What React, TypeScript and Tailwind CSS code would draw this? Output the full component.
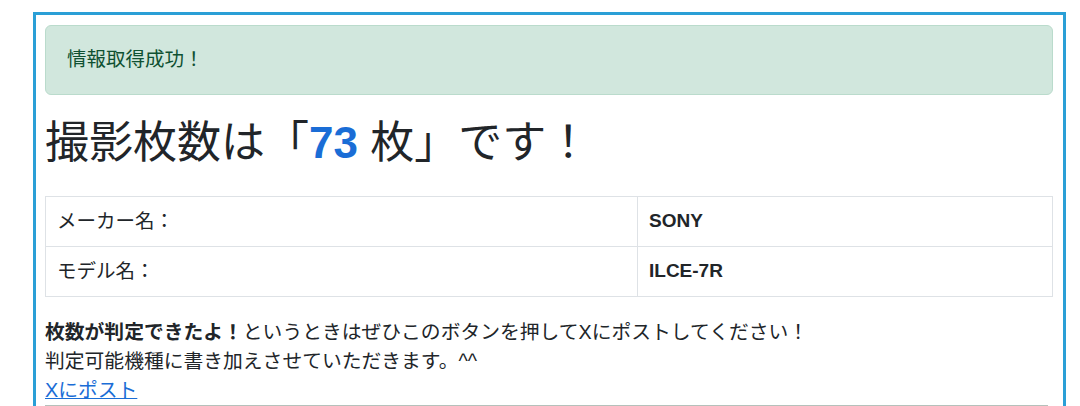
export default function App() {
  const font = {
    fontFamily: '"Liberation Sans", "Noto Sans CJK JP", sans-serif',
  };
  return (
    <div className="min-h-screen bg-white pl-[33px] pt-[12px]" style={font}>
      <div className="w-[1033px] border-[3px] border-[#2a9fd6] pl-[9px] pr-[10px] pt-[10px] pb-[40px] text-[#212529]">
        {/* success alert */}
        <div className="h-[70px] flex items-center rounded-[6px] border border-[#badbcc] bg-[#d1e7dd] px-[21px] text-[19.5px] text-[#0f5132]">
          情報取得成功！
        </div>

        <h1 className="mt-[19px] h-[58px] flex items-center text-[44px] font-normal leading-none">
          撮影枚数は「<span className="font-bold text-[#1a6dd6]">73</span>&nbsp;枚」です！
        </h1>

        <table className="mt-[24px] w-full border-collapse text-[19.5px]">
          <tbody>
            <tr className="h-[50px]">
              <td className="w-[592px] border border-[#dee2e6] px-[11px]">メーカー名：</td>
              <td className="border border-[#dee2e6] px-[11px] font-bold text-[19px]">SONY</td>
            </tr>
            <tr className="h-[50px]">
              <td className="border border-[#dee2e6] px-[11px]">モデル名：</td>
              <td className="border border-[#dee2e6] px-[11px] font-bold text-[19px]">ILCE-7R</td>
            </tr>
          </tbody>
        </table>

        <p className="mt-[21px] text-[19.8px] leading-[29px]">
          <b>枚数が判定できたよ！</b>というときはぜひこのボタンを押してXにポストしてください！
          <br />
          判定可能機種に書き加えさせていただきます。^^
        </p>
        <a href="#" className="block w-fit text-[19.8px] leading-[29px] text-[#1a6dd6] underline">
          Xにポスト
        </a>
        <div className="w-[1003px] border-t border-[#b5c1bb]" />
      </div>
    </div>
  );
}
